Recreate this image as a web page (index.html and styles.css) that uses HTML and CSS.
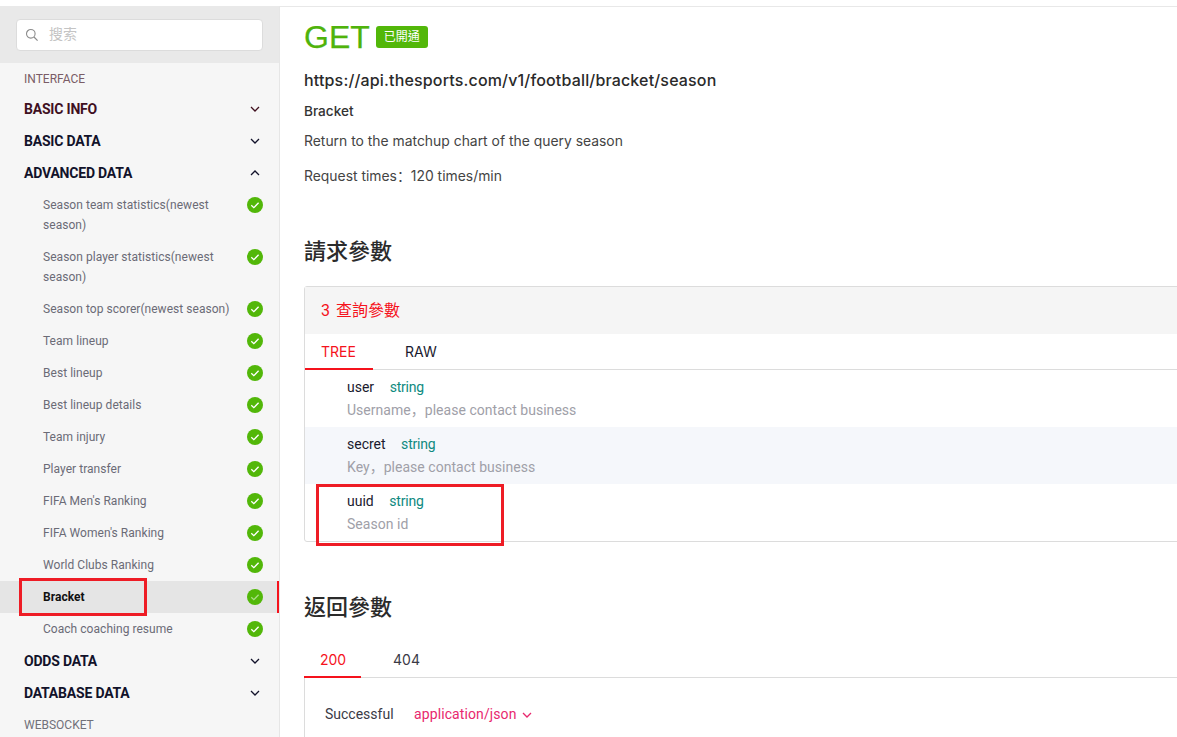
FILE: index.html
```html
<!DOCTYPE html>
<html lang="zh-Hant">
<head>
<meta charset="utf-8">
<title>Bracket</title>
<link rel="stylesheet" href="styles.css">
</head>
<body>
<svg class="defs" width="0" height="0" aria-hidden="true">
  <symbol id="down" viewBox="0 0 10 6"><path d="M1 1l4 4 4-4" fill="none" stroke="currentColor" stroke-width="1.3"/></symbol>
  <symbol id="up" viewBox="0 0 10 6"><path d="M1 5l4-4 4 4" fill="none" stroke="currentColor" stroke-width="1.3"/></symbol>
  <symbol id="ok" viewBox="0 0 16 16"><circle cx="8" cy="8" r="8" fill="#52b709"/><path d="M4.3 8.3l2.5 2.4 4.8-4.9" fill="none" stroke="currentColor" stroke-width="1.3"/></symbol>
</svg>
<aside class="sidebar">
  <div class="search-wrap">
    <div class="search">
      <svg class="search-icon" viewBox="0 0 14 14"><circle cx="5.8" cy="5.8" r="4.3" fill="none" stroke="#8c8c8c" stroke-width="1.1"/><path d="M9 9l3.6 3.6" stroke="#8c8c8c" stroke-width="1.2" fill="none"/></svg>
      <span class="placeholder">搜索</span>
    </div>
  </div>
  <div class="label label-first">INTERFACE</div>
  <div class="group group-first">BASIC INFO<svg class="chev"><use href="#down"/></svg></div>
  <div class="group">BASIC DATA<svg class="chev"><use href="#down"/></svg></div>
  <div class="group">ADVANCED DATA<svg class="chev"><use href="#up"/></svg></div>
  <div class="item"><span class="item-text">Season team statistics(newest season)</span><svg class="ok"><use href="#ok"/></svg></div>
  <div class="item"><span class="item-text">Season player statistics(newest season)</span><svg class="ok"><use href="#ok"/></svg></div>
  <div class="item"><span class="item-text">Season top scorer(newest season)</span><svg class="ok"><use href="#ok"/></svg></div>
  <div class="item"><span class="item-text">Team lineup</span><svg class="ok"><use href="#ok"/></svg></div>
  <div class="item"><span class="item-text">Best lineup</span><svg class="ok"><use href="#ok"/></svg></div>
  <div class="item"><span class="item-text">Best lineup details</span><svg class="ok"><use href="#ok"/></svg></div>
  <div class="item"><span class="item-text">Team injury</span><svg class="ok"><use href="#ok"/></svg></div>
  <div class="item"><span class="item-text">Player transfer</span><svg class="ok"><use href="#ok"/></svg></div>
  <div class="item"><span class="item-text">FIFA Men's Ranking</span><svg class="ok"><use href="#ok"/></svg></div>
  <div class="item"><span class="item-text">FIFA Women's Ranking</span><svg class="ok"><use href="#ok"/></svg></div>
  <div class="item"><span class="item-text">World Clubs Ranking</span><svg class="ok"><use href="#ok"/></svg></div>
  <div class="item item-active"><span class="item-text">Bracket</span><svg class="ok"><use href="#ok"/></svg></div>
  <div class="item"><span class="item-text">Coach coaching resume</span><svg class="ok"><use href="#ok"/></svg></div>
  <div class="group">ODDS DATA<svg class="chev"><use href="#down"/></svg></div>
  <div class="group">DATABASE DATA<svg class="chev"><use href="#down"/></svg></div>
  <div class="label">WEBSOCKET</div>
  <div class="annot annot-side"></div>
</aside>
<main class="main">
  <div class="method-row"><span class="method">GET</span><span class="badge">已開通</span></div>
  <div class="url">https://api.thesports.com/v1/football/bracket/season</div>
  <div class="name">Bracket</div>
  <p class="desc">Return to the matchup chart of the query season</p>
  <p class="desc desc-rate" lang="zh-Hans">Request times：120 times/min</p>
  <h2 class="heading">請求參數</h2>
  <section class="panel">
    <div class="panel-head">3 查詢參數</div>
    <div class="tabs tabs-panel">
      <span class="tab tab-on tab-tree">TREE</span>
      <span class="tab tab-raw">RAW</span>
    </div>
    <div class="param"><div class="param-top"><span class="pname">user</span><span class="ptype">string</span></div><div class="pdesc" lang="zh-Hans">Username，please contact business</div></div>
    <div class="param param-alt"><div class="param-top"><span class="pname">secret</span><span class="ptype">string</span></div><div class="pdesc" lang="zh-Hans">Key，please contact business</div></div>
    <div class="param"><div class="param-top"><span class="pname">uuid</span><span class="ptype">string</span></div><div class="pdesc">Season id</div></div>
  </section>
  <h2 class="heading heading-return">返回參數</h2>
  <div class="tabs tabs-return">
    <span class="tab tab-on tab-200">200</span>
    <span class="tab tab-404">404</span>
  </div>
  <div class="response">
    <span class="resp-label">Successful</span>
    <span class="resp-type">application/json<svg class="chev-small"><use href="#down"/></svg></span>
  </div>
  <div class="annot annot-main"></div>
</main>
</body>
</html>
```
FILE: styles.css
```css
* { box-sizing: border-box; }
html, body { margin: 0; height: 737px; overflow: hidden; background: #fff; }
body {
  display: flex;
  font-family: Roboto, "Noto Sans CJK SC", sans-serif;
  color: #1a1a2e;
}
.defs { position: absolute; }

.sidebar {
  position: relative;
  flex: 0 0 280px;
  height: 731px;
  margin-top: 6px;
  background: #f6f6f6;
  border-right: 1px solid #e6e6e6;
  overflow: hidden;
}
.search-wrap { height: 57px; padding: 13px 16px 0; background: #e9e9e9; }
.search {
  display: flex;
  align-items: center;
  height: 32px;
  padding-left: 8px;
  background: #fff;
  border: 1px solid #dcdcdc;
  border-radius: 4px;
}
.search-icon { width: 14px; height: 14px; }
.placeholder { margin-left: 10px; font-size: 14px; line-height: 28px; padding-bottom: 2px; color: #c4c4c4; }

.label { height: 32px; padding-left: 24px; font-size: 12px; line-height: 32px; color: #71717a; }
.label-first { height: 30px; color: #7a5c66; }
.group {
  display: flex;
  align-items: center;
  justify-content: space-between;
  height: 32px;
  padding: 0 19px 0 24px;
  font-size: 14px;
  letter-spacing: -0.2px;
  font-weight: 700;
  color: #12122a;
}
.group-first { color: #40101f; }
.chev { width: 10px; height: 6px; }

.item {
  display: flex;
  justify-content: space-between;
  padding: 6px 16px 6px 43px;
  font-size: 12px;
  line-height: 20px;
  letter-spacing: 0.04px;
  color: #6b6b76;
}
.item-text { width: 188px; }
.ok { flex: none; width: 16px; height: 16px; margin-top: 2px; color: #fff; }
.item-active {
  background: #e5e5e5;
  border-right: 2px solid #f5121c;
  padding-right: 14px;
  color: #111;
  font-weight: 700;
}
.item-active .ok { color: #a9dd85; }

.main { position: relative; flex: 1; min-width: 0; height: 731px; margin-top: 6px; padding-left: 24px; border-top: 1px solid #e8e8e8; }
.method-row { display: flex; align-items: center; height: 58px; }
.method { margin-top: 2px; font: 400 32px/58px "Liberation Sans", sans-serif; -webkit-text-stroke: 0.25px #4fb30b; color: #4fb30b; }
.badge {
  width: 52px;
  height: 22px;
  margin: 2px 0 0 6px;
  background: #52b709;
  border-radius: 3px;
  font-size: 12px;
  line-height: 22px;
  text-align: center;
  color: #fff;
}
.url { font: 500 16px/30px Inter, "Noto Sans CJK SC", sans-serif; letter-spacing: 0.16px; color: #2a2a2a; }
.name { margin-top: 1px; font: 500 13.6px/30px Inter, "Noto Sans CJK SC", sans-serif; color: #333; }
.desc { margin: 0; font: 400 13.9px/30px Inter, "Noto Sans CJK SC", sans-serif; color: #444; }
.desc-rate { margin-top: 5px; }
.heading { margin: 46px 0 0; font-size: 22px; font-weight: 500; line-height: 30px; color: #2b2b2b; }
.heading-return { margin-top: 51px; }

.panel { width: 900px; height: 256px; margin-top: 19px; border: 1px solid #dcdcdc; border-radius: 3px 0 0 3px; }
.panel-head { height: 47px; padding-left: 16px; font-size: 16px; word-spacing: 2px; line-height: 48px; color: #f5121c; background: #f5f5f5; }
.tabs { display: flex; border-bottom: 1px solid #dcdcdc; font: 400 14px Inter, sans-serif; }
.tabs-panel { height: 36px; }
.tab { height: 36px; line-height: 35px; }
.tab-on { color: #f5121c; border-bottom: 2px solid #f5121c; }
.tab-tree { width: 68px; padding-left: 16px; }
.tab-raw { margin-left: 32px; color: #1a1a2e; }
.param { height: 57px; padding: 6px 0 0 42px; }
.param-alt { background: #f5f7fb; }
.param-top { display: flex; height: 23px; line-height: 23px; font-size: 14px; }
.pname { color: #1a1a2e; margin-right: 15.5px; }
.ptype { color: #0e8a80; letter-spacing: -0.2px; }
.pdesc { font-size: 14px; letter-spacing: 0.03px; line-height: 23px; color: #a0a0a8; }

.tabs-return { width: 900px; height: 36px; margin-top: 19px; }
.tab-200 { width: 57px; padding-left: 16px; }
.tab-404 { margin-left: 32px; color: #3a3a46; }
.response { width: 900px; height: 60px; padding: 26px 0 0 20px; border-left: 1px solid #dcdcdc; font-size: 14px; line-height: 20px; }
.resp-label { color: #3a3a46; margin-right: 17px; }
.resp-type { letter-spacing: 0.1px; color: #e8286e; }
.chev-small { width: 10px; height: 6px; margin-left: 5px; vertical-align: 1px; }

.annot { position: absolute; border: 3px solid #ee1c25; pointer-events: none; }
.annot-side { left: 19px; top: 572px; width: 128px; height: 38px; }
.annot-main { left: 36px; top: 477px; width: 188px; height: 62px; }
```
